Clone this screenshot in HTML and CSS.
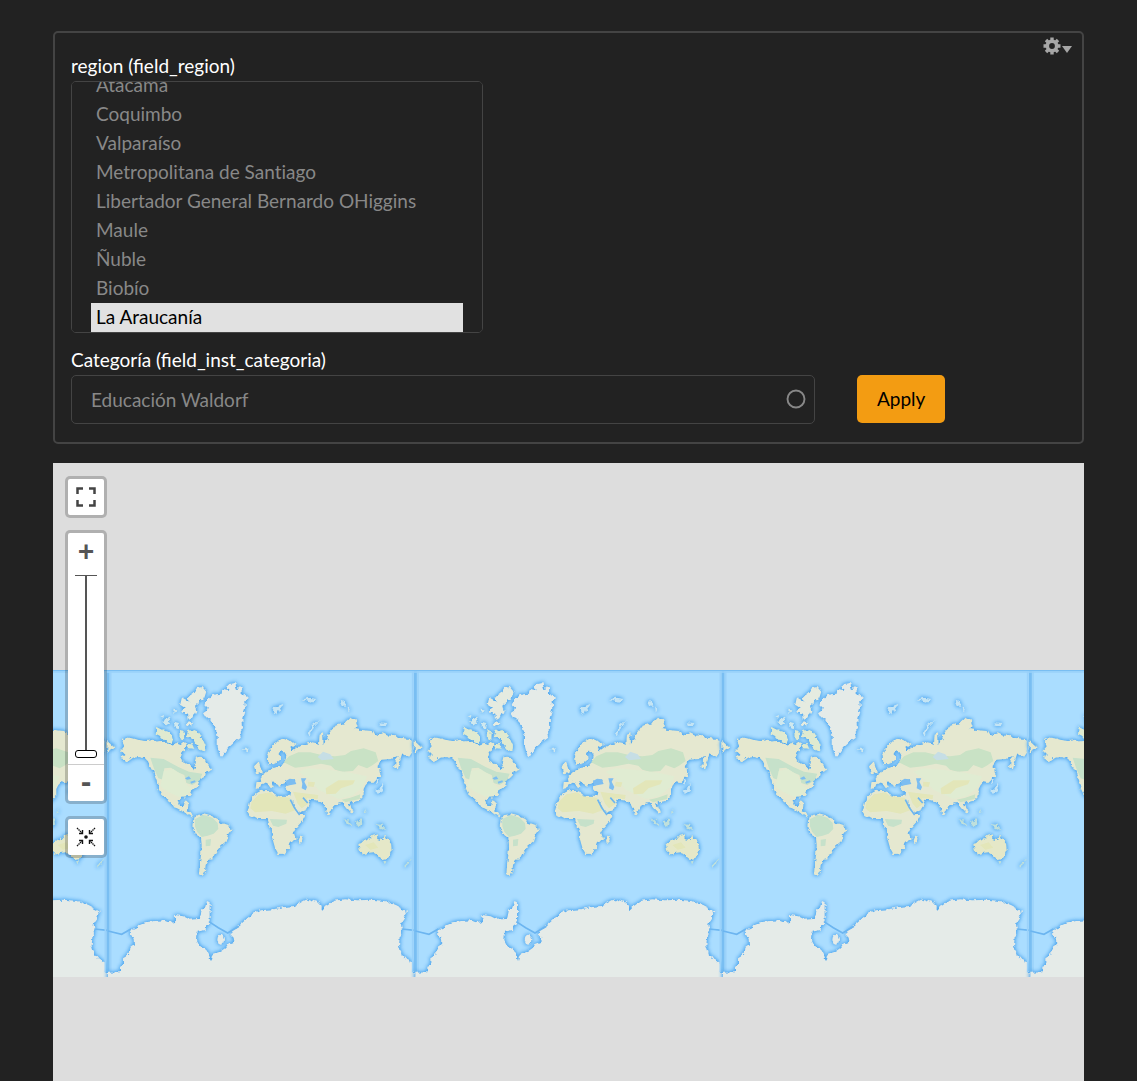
FILE: index.html
```html
<!DOCTYPE html>
<html lang="es">
<head>
<meta charset="utf-8">
<meta name="viewport" content="width=device-width, initial-scale=1">
<title>Instituciones</title>
<link rel="stylesheet" href="styles.css">
</head>
<body>
<form class="filters">
  <button type="button" class="contextual" aria-label="Configuración">
    <svg width="30" height="18" viewBox="0 0 30 18" aria-hidden="true">
      <circle cx="9" cy="9" r="4.7" fill="none" stroke="#a6a6a6" stroke-width="3.6"/>
      <g stroke="#a6a6a6" stroke-width="3.4"><path d="M9 .5v3M9 14.500v3M.5 9h3M14.500 9h3M3 3l2 2M13 13l2 2M3 15l2-2M13 5l2-2"/></g>
      <path d="M19 9h10l-5 7z" fill="#a6a6a6"/>
    </svg>
  </button>
  <label class="label" for="region">region (field_region)</label>
  <select class="region" id="region" multiple>
    <option>Arica y Parinacota</option>
    <option>Tarapacá</option>
    <option>Antofagasta</option>
    <option>Atacama</option>
    <option>Coquimbo</option>
    <option>Valparaíso</option>
    <option>Metropolitana de Santiago</option>
    <option>Libertador General Bernardo OHiggins</option>
    <option>Maule</option>
    <option>Ñuble</option>
    <option>Biobío</option>
    <option selected>La Araucanía</option>
  </select>
  <label class="label label-category" for="category">Categoría (field_inst_categoria)</label>
  <div class="row">
    <div class="category-wrap">
      <select class="category" id="category"><option>Educación Waldorf</option></select>
      <svg class="category-mark" width="20" height="20" viewBox="0 0 20 20" aria-hidden="true"><circle cx="10" cy="10" r="8.500" fill="none" stroke="#888" stroke-width="1.900"/></svg>
    </div>
    <button class="apply" type="submit">Apply</button>
  </div>
</form>

<main class="map">
  <svg class="world" viewBox="0 0 3093 921" preserveAspectRatio="xMinYMin slice" aria-hidden="true">
    <defs>
      <filter id="coast" x="-5%" y="-5%" width="110%" height="110%" color-interpolation-filters="sRGB">
        <feTurbulence type="fractalNoise" baseFrequency="0.07" numOctaves="2" seed="4" result="noise"/>
        <feDisplacementMap in="SourceGraphic" in2="noise" scale="16" xChannelSelector="R" yChannelSelector="G" result="rough"/>
        <feGaussianBlur in="rough" stdDeviation="7" result="b"/>
        <feFlood flood-color="#4fa6ee"/>
        <feComposite in2="b" operator="in" result="halo"/>
        <feGaussianBlur in="rough" stdDeviation="1.500" result="land"/>
        <feMerge><feMergeNode in="halo"/><feMergeNode in="halo"/><feMergeNode in="land"/></feMerge>
      </filter>
      <filter id="soft"><feGaussianBlur stdDeviation="2"/></filter>
      <g id="earth">
        <path d="M9 15V922" stroke="#79bef2" stroke-width="9"/>
        <path d="M1 15V922M17 15V922" stroke="#9bd2fa" stroke-width="5"/>
        <g filter="url(#coast)">
          <!-- Antarctica -->
          <path fill="#e5ebe8" d="M45 922L45 905L54 902L54 880L66 872L75 862L76 845L87 838L86 822L77 808L80 796L94 790L100 780L120 772L150 768L175 766L190 772L210 768L210 750L235 754L250 761L285 758L290 734L300 728L306 708L314 712L314 770L304 782L302 795L275 800L273 825L282 842L300 848L308 862L317 888L322 868L345 860L360 850L368 838L388 830L386 818L376 808L384 795L402 782L418 768L440 748L465 736L500 733L540 726L570 722L600 706L612 702L640 712L650 722L650 736L662 724L685 708L720 703L760 706L800 704L840 708L870 720L900 736L903 748L892 765L888 780L892 805L884 820L882 840L890 868L904 885L922 892L924 922L931 923V960H9V923Z"/>
          <ellipse cx="347" cy="824" rx="10" ry="15" fill="#e5ebe8"/>
          <!-- Greenland and the Canadian Arctic -->
          <path fill="#e5ebe8" d="M294 145L312 132L298 118L316 96L330 88L350 86L352 74L368 78L372 58L390 54L396 72L410 66L410 88L432 98L418 112L420 134L412 160L414 184L404 200L408 218L386 234L370 248L360 262L352 277L344 268L338 246L338 212L330 184L318 164L302 158Z"/>
          <path fill="#e5ebe0" d="M246 98L264 86L276 68L292 66L304 80L298 98L282 112L270 122L274 140L264 160L248 164L246 146L230 142L242 128L226 118L230 100L240 106L256 112ZM240 174L264 170L262 180L240 182Z"/>
          <path fill="#cfe8ee" d="M170 168L192 158L196 170L180 180ZM166 154L180 150L178 160ZM208 170L222 174L218 190L208 186ZM200 134L214 136L210 144ZM414 254L424 246L434 254L424 262Z"/>
          <path fill="#dfead0" d="M154 186L174 196L196 202L206 220L200 234L176 226L164 212L152 206ZM222 192L236 194L234 226L224 220ZM250 198L270 192L284 208L294 224L302 242L300 262L286 256L270 236L262 222L244 214ZM248 236L262 238L268 252L252 250Z"/>
          <!-- North America -->
          <path fill="#e5e8cf" d="M50 226L62 217L84 220L104 226L124 228L144 224L160 232L180 230L198 240L214 234L230 240L240 232L248 236L240 254L229 270L230 286L246 296L260 302L266 316L274 308L268 294L274 274L284 278L298 280L306 296L322 314L304 322L300 334L286 340L278 362L262 376L254 396L228 398L218 406L222 420L236 420L240 406L250 408L250 424L246 434L258 442L262 454L274 462L252 452L236 440L216 430L204 426L190 404L168 386L158 366L154 342L144 318L134 300L122 284L104 276L84 278L66 292L52 282L58 266L48 256L58 244Z"/>
          <!-- South America -->
          <path fill="#e5e8d0" d="M268 458L280 449L296 448L318 454L336 462L348 476L378 487L380 496L368 512L362 530L348 542L332 562L322 582L310 586L302 600L300 620L292 636L282 628L284 600L288 570L290 540L288 520L272 506L265 486Z"/>
          <!-- Africa -->
          <path fill="#e5e8d0" d="M432 422L438 400L456 384L470 376L498 374L506 388L534 392L556 392L562 418L578 440L588 450L602 450L594 466L574 488L566 502L572 520L556 536L552 550L538 566L520 567L510 548L502 520L504 500L492 476L488 462L458 462L436 450L428 438ZM585 512L596 514L594 530L584 541L581 524Z"/>
          <!-- Eurasia -->
          <path fill="#e5e8d0" d="M452 372L454 352L466 350L464 340L478 326L496 318L500 306L514 304L532 302L540 290L544 270L532 252L524 266L526 284L514 294L504 298L490 296L488 272L498 252L516 230L536 218L554 226L572 240L556 248L562 260L578 248L596 238L622 232L642 236L644 206L654 202L656 236L668 224L664 208L676 204L690 184L718 174L734 158L752 166L758 184L748 192L778 196L800 198L808 212L830 202L852 212L872 210L886 222L912 224L932 230L950 248L932 250L922 262L912 276L892 268L886 286L878 312L870 304L872 284L882 272L860 282L830 284L816 302L826 312L828 326L812 344L802 354L790 352L782 360L776 372L776 394L762 408L748 410L732 414L736 430L748 440L740 446L722 428L716 412L704 412L688 418L674 446L668 450L660 428L652 412L632 406L608 404L614 418L602 436L582 444L570 426L556 402L558 376L542 374L546 362L566 354L570 342L558 346L548 358L542 344L536 356L524 362L500 350L510 370L496 368L484 350L470 358L466 368ZM450 300L462 294L468 312L474 322L456 328Z"/>
          <path fill="#c4e4f4" d="M608 206L624 180L648 160L628 184L616 212ZM502 130L516 124L536 116L522 136L516 152ZM590 104L610 98L634 102L620 114ZM706 104L718 108L724 122L714 122ZM728 124L738 138L730 142ZM820 172L850 174L840 182L824 182ZM816 334L822 350L810 360ZM810 378L830 364L834 354L836 374L820 386Z"/>
          <!-- Oceania -->
          <path fill="#e5e8c8" d="M760 538L776 528L790 524L800 512L818 508L820 522L832 526L836 506L846 522L858 536L860 556L850 578L832 582L820 572L806 562L788 564L770 570L764 558Z"/>
          <path fill="#bfe0dc" d="M716 456L726 464L740 486L728 480ZM750 472L770 462L772 478L760 486ZM812 480L832 482L844 496L826 490ZM780 428L786 440L780 444ZM838 588L848 590L842 598ZM898 602L918 582L922 576L914 596L900 608Z"/>
          <path fill="#e5e8cf" d="M7 228L28 248L7 260Z"/>
        </g>
        <g filter="url(#soft)">
          <path fill="#c6e1ca" d="M136 278L176 282L220 306L252 320L292 326L284 346L262 360L244 354L238 330L218 322L198 308L178 310L174 344L160 340L146 308ZM270 462L296 450L322 458L338 474L340 492L326 506L308 512L290 516L276 500L270 484ZM302 524L318 522L316 542L302 544ZM494 462L546 464L544 476L520 486L504 482Z"/>
          <path fill="#c9e2c5" d="M536 292L552 274L580 262L616 262L650 270L690 274L720 270L738 258L776 250L812 262L820 288L800 302L786 310L760 300L744 318L712 320L690 314L678 302L648 296L610 304L570 308ZM710 404L736 398L766 388L764 402L736 408L722 412Z"/>
          <path fill="#e0ecd2" d="M176 318L204 312L232 330L244 358L262 372L246 390L222 396L188 380L166 364ZM580 320L610 310L680 316L740 324L786 334L774 366L742 392L700 402L670 388L640 374L612 342Z"/>
          <path fill="#e3e6b9" d="M440 410L462 388L496 382L510 394L554 398L574 434L542 446L500 438L450 442L436 430ZM564 380L590 384L640 390L638 402L606 400L610 416L590 430L578 416ZM662 370L700 346L750 346L744 358L708 370L692 386L664 388ZM610 350L630 352L626 366L608 364ZM780 540L806 532L820 548L796 554Z"/>
          <path fill="#c6dee5" d="M638 276L654 260L676 268L686 282L650 286Z"/>
        </g>
        <g fill="#7cbdf1" filter="url(#soft)">
          <path d="M240 340l12-6 6 8-12 2zM256 350l14-4 2 5-14 5zM542 348l12-7 14 2 6 14-28 5zM588 340l16 0-6 10 8 16-4 10-12-6 2-14z"/>
        </g>
        <g fill="none" stroke="#6cb5f0" stroke-width="5" filter="url(#soft)">
          <path d="M556 404L568 428L584 450M594 398L608 414M9 798L50 808L78 792M312 770L340 788L368 804L402 784M890 792L930 796"/>
        </g>
      </g>
    </defs>
    <rect width="3093" height="921" fill="#aaddff"/>
    <use href="#earth" x="-766" y="-15"/>
    <use href="#earth" x="156" y="-15"/>
    <use href="#earth" x="1078" y="-15"/>
    <use href="#earth" x="2001" y="-15"/>
    <use href="#earth" x="2923" y="-15"/>
    <path d="M0 2H3093" stroke="#79bef2" stroke-width="4"/>
    <path d="M0 6H3093" stroke="#99d1fa" stroke-width="4"/>
  </svg>

  <div class="controls">
    <div class="control">
      <button class="map-button" type="button" aria-label="Pantalla completa">
        <svg width="20" height="20" viewBox="0 0 20 20" aria-hidden="true"><path d="M1.500 7V1.500H7M13 1.500h5.500V7M18.500 13v5.500H13M7 18.500H1.500V13" fill="none" stroke="#444" stroke-width="2.500"/></svg>
      </button>
    </div>
    <div class="control">
      <button class="map-button" type="button" aria-label="Acercar">+</button>
      <input class="zoom" type="range" min="0" max="18" value="0" aria-label="Nivel de zoom">
      <button class="map-button zoom-out" type="button" aria-label="Alejar">-</button>
    </div>
    <div class="control">
      <button class="map-button" type="button" aria-label="Restablecer vista">
        <svg width="20" height="20" viewBox="0 0 20 20" aria-hidden="true">
          <circle cx="10" cy="10" r="1.800" fill="#111"/>
          <path d="M1 1l5 5M19 1l-5 5M1 19l5-5M19 19l-5-5" stroke="#111" stroke-width="1.300" stroke-dasharray="1.500 .6"/>
          <path d="M3 6.500h3.500V3M17 6.500h-3.500V3M3 13.500h3.500V17M17 13.500h-3.500V17" fill="none" stroke="#111" stroke-width="1.400"/>
        </svg>
      </button>
    </div>
  </div>
</main>
</body>
</html>
```
FILE: styles.css
```css
*, *::before, *::after { box-sizing: border-box; }

body {
  display: flex;
  flex-direction: column;
  gap: 19px;
  min-height: 100vh;
  margin: 0;
  padding: 31px 53px 0;
  background: #222;
  color: #fff;
  font: 19px/29px Lato, sans-serif;
}

button, select { font: inherit; }

.filters {
  position: relative;
  padding: 18px 16px;
  border: 2px solid #444;
  border-radius: 5px;
}

.contextual {
  position: absolute;
  top: 4px;
  right: 9px;
  display: flex;
  padding: 0;
  border: 0;
  background: none;
}

.label {
  display: block;
  line-height: 30px;
}

.label-category { margin-top: 12px; }

.region {
  display: block;
  width: 412px;
  max-width: 100%;
  height: 252px;
  padding: 0 19px;
  border: 1px solid #444;
  border-radius: 5px;
  outline: 0;
  background: #222;
  color: #888;
  scrollbar-width: none;
}

.region option {
  min-height: 29px;
  padding: 2px 5px 0;
  font-variant-ligatures: none;
}

.region option:checked {
  background-image: linear-gradient(#e1e1e1, #e1e1e1);
  color: #000;
}

.row {
  display: flex;
  gap: 42px;
}

.category-wrap {
  position: relative;
  flex: 0 1 744px;
}

.category {
  display: block;
  width: 100%;
  height: 49px;
  padding: 0 40px 1px 19px;
  border: 1px solid #444;
  border-radius: 5px;
  appearance: none;
  background: #222;
  color: #888;
}

.category-mark {
  position: absolute;
  top: 14px;
  right: 9px;
  pointer-events: none;
}

.apply {
  height: 48px;
  padding: 0 20px 2px;
  border: 0;
  border-radius: 5px;
  background: #f39c12;
  color: #000;
}

.map {
  position: relative;
  flex: 1;
  padding-top: 207px;
  background: #ddd;
}

.world {
  display: block;
  width: 100%;
  height: 307px;
}

.controls {
  position: absolute;
  top: 13px;
  left: 12px;
  display: flex;
  flex-direction: column;
  gap: 12px;
}

.control {
  display: flex;
  flex-direction: column;
  align-items: center;
  width: 42px;
  border: 3px solid rgba(0, 0, 0, 0.2);
  border-radius: 5px;
  background: #fff;
  background-clip: padding-box;
}

.map-button {
  display: flex;
  align-items: center;
  justify-content: center;
  width: 36px;
  height: 36px;
  padding: 0;
  border: 0;
  background: none;
  color: #555;
  font: bold 26px/36px "DejaVu Sans Mono", monospace;
}

.zoom-out {
  height: 37px;
  border-top: 1px solid #ccc;
}

.zoom {
  width: 22px;
  height: 183px;
  margin: 6px 0;
  appearance: none;
  writing-mode: vertical-lr;
  direction: rtl;
  background:
    linear-gradient(#555, #555) center / 2px 100% no-repeat,
    linear-gradient(#555, #555) top / 100% 1px no-repeat;
}

.zoom::-webkit-slider-thumb {
  appearance: none;
  width: 22px;
  height: 8px;
  border: 1px solid #000;
  border-radius: 3px;
  background: #fff;
}
```
